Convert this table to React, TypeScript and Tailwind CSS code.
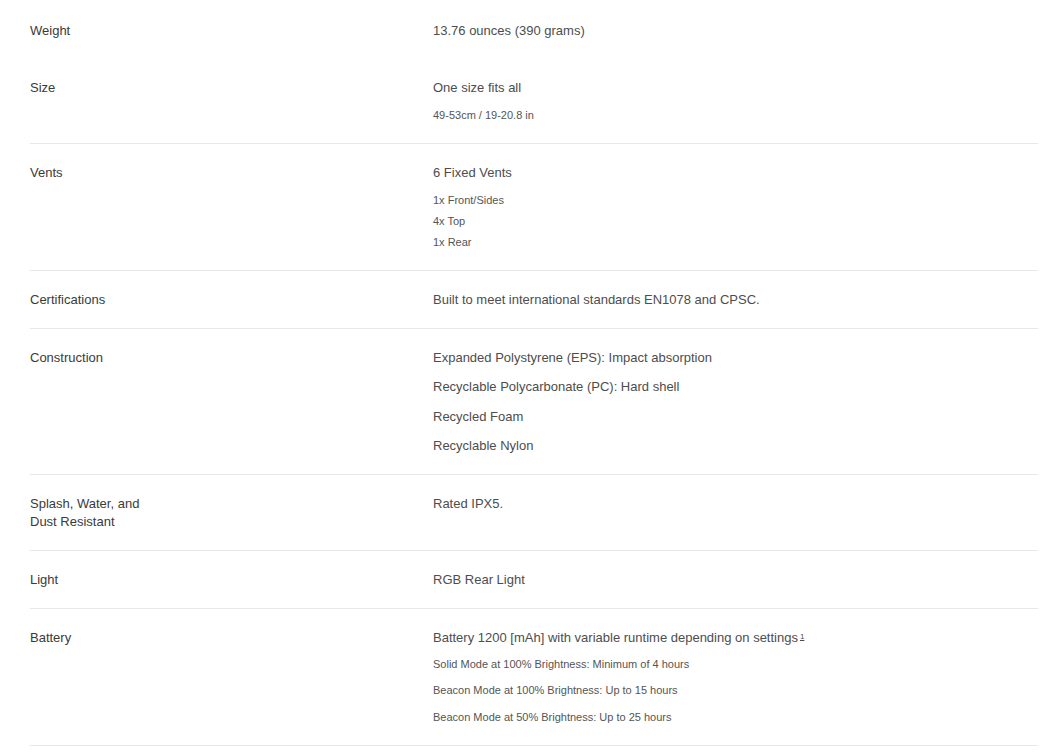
import React from 'react';

type Spec = {
    label: string;
    values: string[];
    notes?: string[];
    noteGap?: 'tight' | 'loose';
    footnote?: boolean;
    border?: boolean;
};

const specs: Spec[] = [
    { label: 'Weight', values: ['13.76 ounces (390 grams)'], border: false },
    { label: 'Size', values: ['One size fits all'], notes: ['49-53cm / 19-20.8 in'], noteGap: 'tight' },
    { label: 'Vents', values: ['6 Fixed Vents'], notes: ['1x Front/Sides', '4x Top', '1x Rear'], noteGap: 'tight' },
    { label: 'Certifications', values: ['Built to meet international standards EN1078 and CPSC.'] },
    {
        label: 'Construction',
        values: [
            'Expanded Polystyrene (EPS): Impact absorption',
            'Recyclable Polycarbonate (PC): Hard shell',
            'Recycled Foam',
            'Recyclable Nylon',
        ],
    },
    { label: 'Splash, Water, and Dust Resistant', values: ['Rated IPX5.'] },
    { label: 'Light', values: ['RGB Rear Light'] },
    {
        label: 'Battery',
        values: ['Battery 1200 [mAh] with variable runtime depending on settings'],
        footnote: true,
        notes: [
            'Solid Mode at 100% Brightness: Minimum of 4 hours',
            'Beacon Mode at 100% Brightness: Up to 15 hours',
            'Beacon Mode at 50% Brightness: Up to 25 hours',
        ],
        noteGap: 'loose',
    },
];

const SpecRow: React.FC<{ spec: Spec }> = ({ spec }) => (
    <div className={`grid grid-cols-[403px_1fr] py-[19px] ${spec.border === false ? '' : 'border-b border-[#e8e8e8]'}`}>
        <div className="max-w-[125px] translate-y-[0.5px] text-[13px] leading-[18.5px] text-[#3a3a3a]">{spec.label}</div>
        <div className="flex flex-col">
            <div className="flex flex-col gap-[10.25px]">
                {spec.values.map((v) => (
                    <p key={v} className="text-[13px] leading-[19px] text-[#4d4d4d]">
                        {v}
                        {spec.footnote && (
                            <sup className="relative -top-[3px] ml-[2px] text-[8px] underline">1</sup>
                        )}
                    </p>
                ))}
            </div>
            {spec.notes && (
                <ul className={`flex flex-col ${spec.noteGap === 'loose' ? 'mt-[9px] gap-[9.5px]' : 'mt-[10px] gap-[4px]'}`}>
                    {spec.notes.map((n) => (
                        <li key={n} className="text-[11px] leading-[17px] text-[#555]">
                            {n}
                        </li>
                    ))}
                </ul>
            )}
        </div>
    </div>
);

export default function App() {
    return (
        <div className="min-h-screen bg-white" style={{ fontFamily: '"Liberation Sans", Arial, sans-serif' }}>
            <div className="ml-[30px] w-[1008px] pt-[2px]">
                {specs.map((s) => (
                    <SpecRow key={s.label} spec={s} />
                ))}
            </div>
        </div>
    );
}
